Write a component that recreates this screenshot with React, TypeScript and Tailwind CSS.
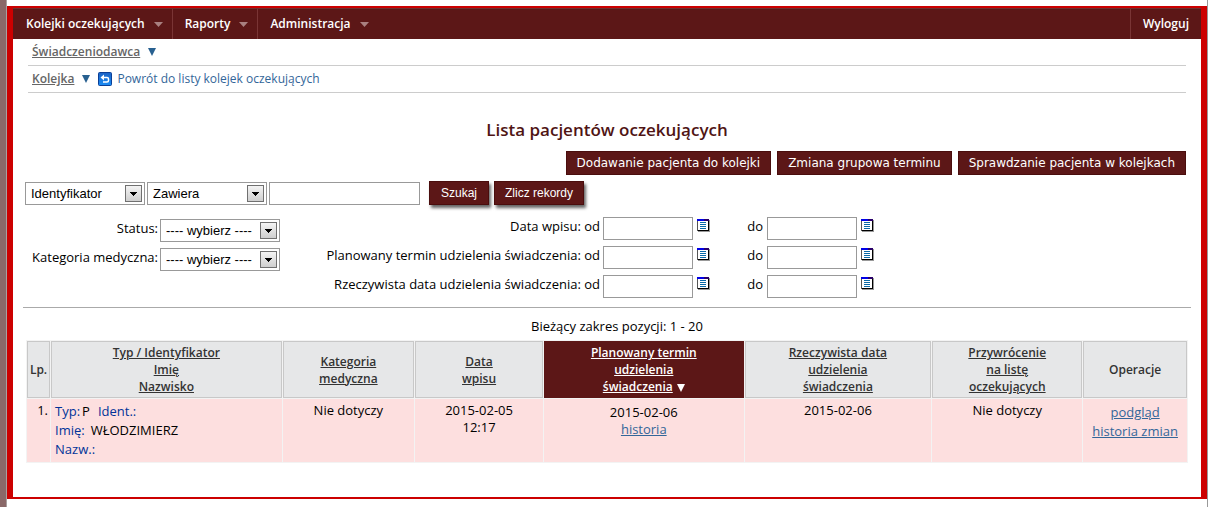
import { useState } from 'react';

type Col = { lines: string[]; width: string; link?: boolean; active?: boolean };

const MENU = ['Kolejki oczekujących', 'Raporty', 'Administracja'];
const ACTIONS = ['Dodawanie pacjenta do kolejki', 'Zmiana grupowa terminu', 'Sprawdzanie pacjenta w kolejkach'];

const RANGES = [
  { id: 'wpis', label: 'Data wpisu: od' },
  { id: 'plan', label: 'Planowany termin udzielenia świadczenia: od' },
  { id: 'rzecz', label: 'Rzeczywista data udzielenia świadczenia: od' },
];

const COLS: Col[] = [
  { lines: ['Lp.'], width: 'w-[2%]' },
  { lines: ['Typ / Identyfikator', 'Imię', 'Nazwisko'], width: 'w-[20%]', link: true },
  { lines: ['Kategoria', 'medyczna'], width: 'w-[11.4%]', link: true },
  { lines: ['Data', 'wpisu'], width: 'w-[11.1%]', link: true },
  { lines: ['Planowany termin', 'udzielenia', 'świadczenia'], width: 'w-[17.3%]', link: true, active: true },
  { lines: ['Rzeczywista data', 'udzielenia', 'świadczenia'], width: 'w-[16.2%]', link: true },
  { lines: ['Przywrócenie', 'na listę', 'oczekujących'], width: 'w-[13%]', link: true },
  { lines: ['Operacje'], width: 'w-[9%]' },
];

function Down({ className }: { className: string }) {
  return (
    <svg viewBox="0 0 10 10" preserveAspectRatio="none" className={className} fill="currentColor" aria-hidden="true">
      <path d="M0 0h10L5 10z" />
    </svg>
  );
}

function BackIcon() {
  return (
    <svg width="14" height="14" viewBox="0 0 14 14" aria-hidden="true">
      <defs>
        <linearGradient id="back" x1="0" y1="0" x2="0" y2="1">
          <stop offset="0" stopColor="#1c62c4" />
          <stop offset="1" stopColor="#1b8df5" />
        </linearGradient>
      </defs>
      <rect x="0.5" y="0.5" width="13" height="13" rx="1" fill="url(#back)" stroke="#0b3f96" />
      <path d="M5 5.5h4a1.5 1.5 0 0 1 1.5 1.5v1.5A1.5 1.5 0 0 1 9 10H5" fill="none" stroke="#fff" strokeWidth="1.5" />
      <path d="M2.5 5.5 6 2.5v6z" fill="#fff" />
    </svg>
  );
}

function CalendarIcon() {
  return (
    <svg width="13" height="13" viewBox="0 0 13 13" shapeRendering="crispEdges" aria-hidden="true">
      <path d="M1 1h12v12H1z" fill="#999" />
      <path d="M0 0h12v12H0z" fill="#000" />
      <path d="M0 2h1v10H0z" fill="#555" />
      <path d="M1 2h10v9H1z" fill="#fff" />
      <path d="M0 0h7v2H0z" fill="#0000e6" />
      <path d="M7 0h5v2H7z" fill="#2a006a" />
      <path d="M3 3h6v1H3zM3 5h6v1H3zM3 7h6v1H3zM3 9h6v1H3z" fill="#0a6aa8" />
    </svg>
  );
}

function Select({ id, label, options }: { id: string; label?: string; options: string[] }) {
  return (
    <span className="relative inline-flex">
      <select
        id={id}
        aria-label={label}
        className="h-[23px] w-[120px] appearance-none rounded-none border border-[#999] bg-white pl-[5px] text-[13px] leading-4 text-black font-['Liberation_Sans',sans-serif]"
      >
        {options.map((o) => (
          <option key={o}>{o}</option>
        ))}
      </select>
      <span className="pointer-events-none absolute top-[3px] right-[3px] flex h-[17px] w-[17px] items-center justify-center border border-[#707070] bg-linear-to-b from-[#f4f4f4] to-[#cfcfcf]">
        <svg width="7" height="4" viewBox="0 0 7 4" shapeRendering="crispEdges" aria-hidden="true">
          <path d="M0 0h7v1H6v1H5v1H4v1H3V3H2V2H1V1H0z" />
        </svg>
      </span>
    </span>
  );
}

function DateField({ id, label }: { id: string; label: string }) {
  return (
    <span className="flex items-start gap-1">
      <input id={id} type="text" aria-label={label} className="h-[23px] w-[90px] border border-[#999] bg-white px-1" />
      <button type="button" aria-label={`Kalendarz: ${label}`} className="mt-0.5">
        <CalendarIcon />
      </button>
    </span>
  );
}

export default function App() {
  const [query, setQuery] = useState('');

  return (
    <div className="flex min-h-screen bg-white text-[13px] leading-4 text-black font-['Open_Sans',sans-serif]">
      <div className="w-[7px] shrink-0 border-r border-[#a8a0a0] bg-[#8a6868]" />
      <div className="flex min-w-0 flex-1 flex-col border-r border-[#999] pt-1.5 pb-2">
        <div className="flex-1 border-x-6 border-y-2 border-[#cc0000]">
          <nav className="flex h-[31px] border-t border-[#6e3030] bg-[#5c1717] text-xs font-semibold text-white">
            {MENU.map((m) => (
              <button key={m} type="button" className="flex items-center gap-[9px] border-r border-[#7a3535] pr-[9px] pl-3 first:pl-[13px] last-of-type:border-r-0">
                {m}
                <Down className="h-[5px] w-[9px] text-[#a98080]" />
              </button>
            ))}
            <a href="#wyloguj" className="ml-auto flex items-center border-l border-[#7a3535] px-3">
              Wyloguj
            </a>
          </nav>

          <div className="mx-[15px] text-xs">
            <div className="flex h-[27px] items-center gap-2 border-b border-[#ccc] pl-1">
              <a href="#swiadczeniodawca" className="font-semibold text-[#666] underline">Świadczeniodawca</a>
              <Down className="h-2 w-2 text-[#286090]" />
            </div>
            <div className="flex h-[27px] items-center gap-2 border-b border-[#ccc] pl-1">
              <a href="#kolejka" className="font-semibold text-[#666] underline">Kolejka</a>
              <Down className="h-2 w-2 text-[#286090]" />
              <a href="#powrot" className="flex items-center gap-[5px] pb-px text-[#336699]">
                <BackIcon />
                Powrót do listy kolejek oczekujących
              </a>
            </div>
          </div>

          <h1 className="mt-[27px] text-center text-[17px] leading-5 font-semibold text-[#4f1414]">Lista pacjentów oczekujących</h1>

          <div className="mt-[11px] mr-[15px] flex justify-end gap-1.5">
            {ACTIONS.map((a) => (
              <button key={a} type="button" className="h-6 border border-[#4a0d0d] bg-[#5c1717] px-2.5 text-xs text-white font-['DejaVu_Sans',sans-serif]">
                {a}
              </button>
            ))}
          </div>

          <form onSubmit={(e) => e.preventDefault()}>
            <div className="mt-1.5 ml-3 flex items-start">
              <div className="mt-px flex gap-0.5">
                <Select id="pole" label="Pole" options={['Identyfikator', 'Nazwisko']} />
                <Select id="operator" label="Operator" options={['Zawiera', 'Równe']} />
                <input
                  type="text"
                  aria-label="Szukana wartość"
                  value={query}
                  onChange={(e) => setQuery(e.target.value)}
                  className="h-[23px] w-[151px] border border-[#999] bg-white px-1"
                />
              </div>
              <div className="ml-[9px] flex gap-[5px] text-xs text-white font-['Liberation_Sans',sans-serif]">
                <button type="submit" className="h-6 w-[60px] border border-[#4a0d0d] bg-[#5c1717] shadow-[2px_3px_3px_#666]">Szukaj</button>
                <button type="button" className="h-6 w-[90px] border border-[#4a0d0d] bg-[#5c1717] shadow-[2px_3px_3px_#666]">Zlicz rekordy</button>
              </div>
            </div>

            <div className="mt-3 flex">
              <div className="mt-0.5 ml-3 flex flex-col gap-1.5">
                <div className="flex w-[255px] justify-end gap-0.5">
                  <label htmlFor="status" className="pt-px">Status:</label>
                  <Select id="status" options={['---- wybierz ----']} />
                </div>
                <div className="flex w-[255px] justify-end gap-0.5">
                  <label htmlFor="kategoria" className="pt-px">Kategoria medyczna:</label>
                  <Select id="kategoria" options={['---- wybierz ----']} />
                </div>
              </div>
              <div className="flex flex-col gap-1.5">
                {RANGES.map((r) => (
                  <div key={r.id} className="flex">
                    <label htmlFor={`${r.id}-od`} className="w-[323px] pt-px pr-[3px] text-right">{r.label}</label>
                    <DateField id={`${r.id}-od`} label={r.label} />
                    <label htmlFor={`${r.id}-do`} className="w-[57px] pt-px pr-1 text-right">do</label>
                    <DateField id={`${r.id}-do`} label={r.label.replace(/od$/, 'do')} />
                  </div>
                ))}
              </div>
            </div>
          </form>

          <hr className="mx-2.5 mt-[9px] border-[#aaa]" />

          <p className="mt-2.5 mb-1.5 pl-5 text-center">Bieżący zakres pozycji: 1 - 20</p>

          <div className="mx-[13px]">
            <table className="w-full table-fixed border-separate border-spacing-px bg-[#f3f3f3]">
              <thead>
                <tr className="h-[57px]">
                  {COLS.map((c) => (
                    <th
                      key={c.lines.join(' ')}
                      className={`${c.width} border p-0 text-xs leading-[17px] font-semibold ${c.active ? 'border-[#5c1717] bg-[#5c1717] text-white' : 'border-[#c8c8c8] bg-[#e6e7e8] text-[#333]'}`}
                    >
                      {c.link ? (
                        <a href="#sort" className="underline">
                          {c.lines.map((l, i) => (
                            <span key={l}>
                              {i > 0 && <br />}
                              {l}
                            </span>
                          ))}
                        </a>
                      ) : (
                        c.lines[0]
                      )}
                      {c.active && <Down className="ml-1 inline-block h-2 w-2" />}
                    </th>
                  ))}
                </tr>
              </thead>
              <tbody>
                <tr className="h-[63px] text-center align-top">
                  <td className="bg-[#fddfdf] p-0 pt-[3px] pr-0.5 text-right">1.</td>
                  <td className="bg-[#fddfdf] p-0 pt-[3px] pl-1 text-left leading-[19px]">
                    <div className="flex">
                      <span className="mr-0.5 text-[#003399]">Typ:</span>P<span className="ml-2 text-[#003399]">Ident.:</span>
                    </div>
                    <div className="flex">
                      <span className="mr-1.5 text-[#003399]">Imię:</span>WŁODZIMIERZ
                    </div>
                    <div className="text-[#003399]">Nazw.:</div>
                  </td>
                  <td className="bg-[#fddfdf] p-0 pt-[3px]">Nie dotyczy</td>
                  <td className="bg-[#fddfdf] p-0 pt-[3px] leading-[17px]">2015-02-05<br />12:17</td>
                  <td className="bg-[#fddfdf] p-0 pt-[5px] leading-[17px]">
                    2015-02-06<br />
                    <a href="#historia" className="text-[#336699] underline">historia</a>
                  </td>
                  <td className="bg-[#fddfdf] p-0 pt-[3px]">2015-02-06</td>
                  <td className="bg-[#fddfdf] p-0 pt-[3px]">Nie dotyczy</td>
                  <td className="bg-[#fddfdf] p-0 pt-1 leading-[19px] text-[#336699]">
                    <a href="#podglad" className="underline">podgląd</a><br />
                    <a href="#zmiany" className="underline">historia zmian</a>
                  </td>
                </tr>
              </tbody>
            </table>
          </div>
        </div>
      </div>
    </div>
  );
}
